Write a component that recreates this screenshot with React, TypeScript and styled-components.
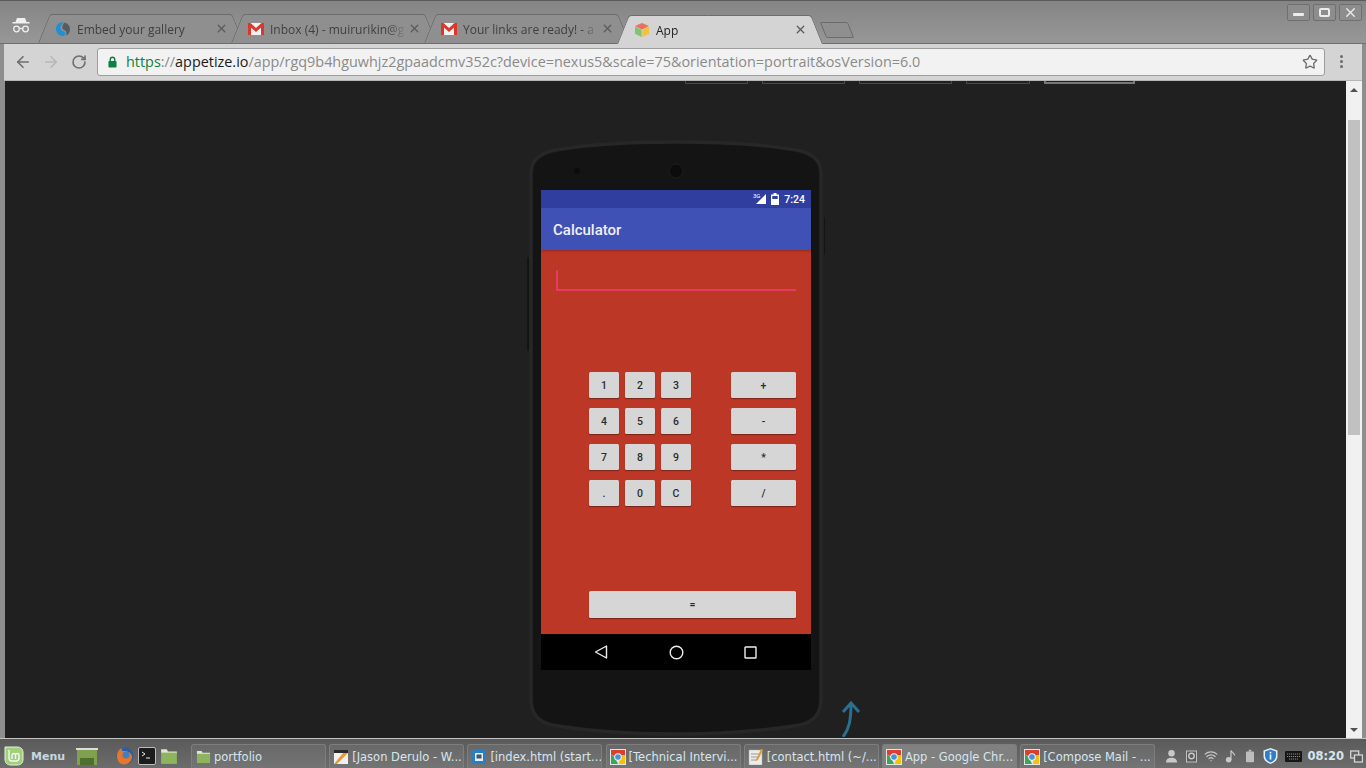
import React from 'react';

import { ArrowLeft, ArrowRight, RotateCw, Star, Wifi, X } from 'lucide-react';
import styled, { createGlobalStyle } from 'styled-components';

const GlobalStyle = createGlobalStyle`
  html, body {
    margin: 0;
    padding: 0;
    height: 100%;
    overflow: hidden;
    background: #5f5f5f;
  }
  * {
    box-sizing: border-box;
  }
`;

const GmailIcon = () => (
  <svg width="16" height="14" viewBox="0 0 16 14">
    <rect x="0" y="1" width="16" height="12" fill="#f2f2f2" />
    <path d="M0 1h2.500L8 6l5.500-5H16v12h-3V5.500L8 10 3 5.500V13H0z" fill="#d9392c" />
  </svg>
);

const SimplenoteIcon = () => (
  <svg width="16" height="16" viewBox="0 0 16 16">
    <path d="M9 1C4 1 1 4 1 8c0 4 3 7 7 7 2 0 3-2 2-3.500C9 10 6 10 5.500 7.500 5 5 7 2.500 9 1z" fill="#1f8fd6" />
    <path d="M9.500 1.500c3.500 1 5.500 3.500 5.500 6.500 0 3.500-2 6-4 6.500 1-2 .5-4-1-5-1.500-1-3-1.500-2.700-3.500.2-2 1.200-3 2.200-4.500z" fill="#555c62" />
  </svg>
);

const CubeIcon = () => (
  <svg width="16" height="16" viewBox="0 0 16 16">
    <path d="M8 1l7 3-7 3.400L1 4z" fill="#e8705f" />
    <path d="M1 4.500l6.600 3.300V15L1 11.800z" fill="#7cc576" />
    <path d="M15 4.500L8.400 7.800V15l6.600-3.200z" fill="#f3c13c" />
  </svg>
);

const IncognitoIcon = () => (
  <svg width="18" height="18" viewBox="0 0 18 18" fill="none">
    <path d="M5 2h8l1.500 4H3.500z" fill="#f0f0f0" />
    <rect x="0.500" y="6" width="17" height="1.500" fill="#f0f0f0" />
    <circle cx="4.500" cy="13" r="2.800" stroke="#f0f0f0" strokeWidth="1.300" />
    <circle cx="13.500" cy="13" r="2.800" stroke="#f0f0f0" strokeWidth="1.300" />
    <path d="M7.300 12.500h3.400" stroke="#f0f0f0" strokeWidth="1.300" />
  </svg>
);

const LockIcon = () => (
  <svg width="9" height="12" viewBox="0 0 10 13" fill="none">
    <path d="M2.500 6V3.700a2.500 2.500 0 015 0V6" stroke="#0b8043" strokeWidth="1.500" />
    <rect x="0.500" y="5.500" width="9" height="7" rx="0.800" fill="#0b8043" />
  </svg>
);

const ChromeIcon = () => (
  <svg width="16" height="16" viewBox="0 0 16 16">
    <rect width="16" height="16" fill="#e5e5e5" />
    <path d="M1 1h14v5.500H8a3 3 0 00-2.600 1.500L1 5z" fill="#d8402f" />
    <path d="M1 4.500L5.500 9.500 8 15H1z" fill="#3aa757" />
    <path d="M15 6H10l-1 9h6z" fill="#f4c20d" />
    <circle cx="8" cy="8" r="3.800" fill="#f0f0f0" />
    <circle cx="8" cy="8" r="2.800" fill="#4a8fe0" />
  </svg>
);

const FolderIcon = ({ size = 15 }: { size?: number }) => (
  <svg width={size} height={size} viewBox="0 0 16 16">
    <path d="M1 2h5l1 2h8v2H1z" fill="#dfe8d0" />
    <path d="M1 5h14v10H1z" fill="#8fb45f" />
  </svg>
);

const DesktopIcon = () => (
  <svg width="22" height="17" viewBox="0 0 22 17">
    <rect x="0" y="0" width="22" height="2" fill="#dcdcdc" />
    <rect x="1" y="2" width="20" height="15" fill="#7fa04f" />
    <rect x="4" y="10" width="14" height="7" fill="#4f6f30" />
  </svg>
);

const MintIcon = () => (
  <svg width="20" height="20" viewBox="0 0 20 20" fill="none">
    <path d="M1 1h12c4 0 6 2 6 6v6c0 4-2 6-6 6H7c-4 0-6-2-6-6z" fill="#9fd07a" stroke="#e8f3dd" strokeWidth="1" />
    <path d="M5 4v8c0 2 1 3 3 3h4c2 0 3-1 3-3V9c0-2-3-2-3.500 0v4M8 13V9c.5-2 3.500-2 3.500 0" stroke="#f5f5f5" strokeWidth="1.400" />
  </svg>
);

const FirefoxIcon = () => (
  <svg width="18" height="18" viewBox="0 0 18 18">
    <circle cx="9" cy="9" r="8.500" fill="#2a5fa8" />
    <path d="M1 9c0-4 2-7 5-8-1 2 0 3 2 3 4 0 7 2 8 5 .5 4-3 8.500-8 8.500S1 13 1 9z" fill="#e8752a" />
    <circle cx="10" cy="8" r="3.500" fill="#3f7fc4" />
  </svg>
);

const TerminalIcon = () => (
  <svg width="18" height="18" viewBox="0 0 18 18" fill="none">
    <rect x="0.500" y="0.500" width="17" height="17" rx="1.500" fill="#1c1c1c" stroke="#bcbcbc" />
    <path d="M4 5l3 2-3 2M8 11h4" stroke="#e8e8e8" />
  </svg>
);

const ClapperIcon = () => (
  <svg width="16" height="16" viewBox="0 0 16 16">
    <rect x="1" y="1" width="14" height="3" fill="#2a2a2a" />
    <rect x="1" y="4" width="14" height="11" fill="#f1f1f1" />
    <path d="M1 15l9-11h5L4 15z" fill="#e79a3a" />
  </svg>
);

const BracketsIcon = () => (
  <svg width="14" height="14" viewBox="0 0 14 14">
    <rect width="14" height="14" rx="2" fill="#2a7fc4" />
    <rect x="3" y="3" width="8" height="8" fill="#e8eef2" />
    <rect x="4.500" y="4.500" width="5" height="4" fill="#3d5a70" />
  </svg>
);

const NotesIcon = () => (
  <svg width="16" height="16" viewBox="0 0 16 16">
    <rect x="1" y="1" width="13" height="15" fill="#ececec" stroke="#aaa" strokeWidth="0.500" />
    <path d="M3 5h9M3 8h8M3 11h6" stroke="#9a9a9a" />
    <path d="M13 0l2 1-5 10-2 1 .3-2z" fill="#d9a13a" />
  </svg>
);

const PersonIcon = () => (
  <svg width="13" height="14" viewBox="0 0 14 14" fill="#c9c9c9">
    <circle cx="7" cy="4" r="3.500" />
    <path d="M1 14c0-3 2-5 6-5s6 2 6 5z" />
  </svg>
);

const UpdateIcon = () => (
  <svg width="11" height="13" viewBox="0 0 12 13" fill="none">
    <rect x="0.500" y="0.500" width="11" height="12" fill="#5c5c5c" stroke="#c9c9c9" />
    <circle cx="6" cy="6" r="3" stroke="#c9c9c9" strokeWidth="1.500" />
  </svg>
);

const NoteIcon = () => (
  <svg width="11" height="14" viewBox="0 0 12 14" fill="none">
    <circle cx="4" cy="11" r="3" fill="#c9c9c9" />
    <path d="M6.500 11V1c.5 2 4 2.500 4 5.500" stroke="#c9c9c9" strokeWidth="1.300" />
  </svg>
);

const BatteryIcon = () => (
  <svg width="8" height="14" viewBox="0 0 9 14">
    <rect x="3" y="0" width="3" height="2" fill="#bdbdbd" />
    <rect x="0" y="2" width="9" height="12" rx="1" fill="#bdbdbd" />
  </svg>
);

const ShieldIcon = () => (
  <svg width="15" height="16" viewBox="0 0 15 16">
    <path d="M7.500 0l7 2.500V8c0 4-3 6.500-7 8-4-1.500-7-4-7-8V2.500z" fill="#e8eef4" />
    <path d="M7.500 1.500l5.500 2V8c0 3-2.500 5.300-5.500 6.500C4.500 13.300 2 11 2 8V3.500z" fill="#2f7fc8" />
    <rect x="6.700" y="6.500" width="1.600" height="5" fill="#fff" />
    <rect x="6.700" y="3.800" width="1.600" height="1.700" fill="#fff" />
  </svg>
);

const KeyboardIcon = () => (
  <svg width="17" height="11" viewBox="0 0 17 11" fill="none">
    <rect width="17" height="11" rx="1" fill="#161616" />
    <path d="M2 3h13M2 5.500h13M4 8h9" stroke="#8a8a8a" strokeDasharray="1.200 .8" />
  </svg>
);

const WindowsIcon = () => (
  <svg width="13" height="13" viewBox="0 0 13 13" fill="none" stroke="#d5d5d5" strokeWidth="1.300">
    <rect x="0.700" y="1" width="8" height="7" />
    <rect x="4.500" y="5" width="8" height="7" fill="#5c5c5c" />
  </svg>
);

const tabs = [
  { title: 'Embed your gallery', icon: <SimplenoteIcon /> },
  { title: 'Inbox (4) - muirurikin@g', icon: <GmailIcon /> },
  { title: 'Your links are ready! - a', icon: <GmailIcon /> },
  { title: 'App', icon: <CubeIcon />, active: true },
];

const windows = [
  { title: 'portfolio', icon: <FolderIcon /> },
  { title: '[Jason Derulo - W...', icon: <ClapperIcon /> },
  { title: '[index.html (start...', icon: <BracketsIcon /> },
  { title: '[Technical Intervi...', icon: <ChromeIcon /> },
  { title: '[contact.html (~/...', icon: <NotesIcon /> },
  { title: 'App - Google Chr...', icon: <ChromeIcon />, active: true },
  { title: '[Compose Mail - ...', icon: <ChromeIcon /> },
];

const siteLinks = [
  { width: 63 },
  { width: 83 },
  { width: 93 },
  { width: 64 },
  { width: 91, bright: true },
];

const trayItems = [
  { width: 21, icon: <PersonIcon /> },
  { width: 19, icon: <UpdateIcon /> },
  { width: 20, icon: <Wifi size={14} color="#c9c9c9" strokeWidth={2.2} /> },
  { width: 19, icon: <NoteIcon /> },
  { width: 20, icon: <BatteryIcon /> },
  { width: 21, icon: <ShieldIcon /> },
  { width: 24, icon: <KeyboardIcon /> },
];

const digits = ['1', '2', '3', '4', '5', '6', '7', '8', '9', '.', '0', 'C'];
const operators = ['+', '-', '*', '/'];

export default function App() {
  return (
    <>
      <GlobalStyle />
      <Desktop>
        <BrowserWindow>
          <TabStrip>
            <IncognitoBox>
              <IncognitoIcon />
            </IncognitoBox>
            {tabs.map((tab) => (
              <Tab key={tab.title} $active={tab.active}>
                <TabIcon>{tab.icon}</TabIcon>
                <TabTitle $active={tab.active}>{tab.title}</TabTitle>
                <TabClose>
                  <X size={13} strokeWidth={2.4} />
                </TabClose>
              </Tab>
            ))}
            <NewTab />
            <WindowControls>
              <WindowButton>
                <MinimizeGlyph />
              </WindowButton>
              <WindowButton>
                <MaximizeGlyph />
              </WindowButton>
              <WindowButton>
                <X size={15} strokeWidth={2.2} color="#ececec" />
              </WindowButton>
            </WindowControls>
          </TabStrip>

          <Toolbar>
            <NavButton>
              <ArrowLeft size={18} strokeWidth={2.2} color="#6e6e6e" />
            </NavButton>
            <NavButton>
              <ArrowRight size={18} strokeWidth={2.2} color="#b6b6b6" />
            </NavButton>
            <NavButton>
              <RotateCw size={16} strokeWidth={2.4} color="#6e6e6e" />
            </NavButton>
            <Omnibox>
              <LockIcon />
              <Url>
                <UrlScheme>https</UrlScheme>
                <UrlRest>://</UrlRest>
                <UrlHost>appetize.io</UrlHost>
                <UrlRest>
                  /app/rgq9b4hguwhjz2gpaadcmv352c?device=nexus5&amp;scale=75&amp;orientation=portrait&amp;osVersion=6.0
                </UrlRest>
              </Url>
              <StarBox>
                <Star size={16} strokeWidth={2} color="#6e6e6e" />
              </StarBox>
            </Omnibox>
            <MenuDots>
              <i />
              <i />
              <i />
            </MenuDots>
          </Toolbar>

          <Viewport>
            <Page>
              <SiteNav>
                {siteLinks.map((link, i) => (
                  <SiteLink key={i} $width={link.width} $bright={link.bright} />
                ))}
              </SiteNav>

              <Phone>
                <PhoneBody viewBox="0 0 298 598" width="298" height="598">
                  <path
                    d="M4 35C4 22 11 16 24 12 60 5 110 3 149 3s89 2 125 9c13 4 20 10 20 23v525c0 15-7 23-21 26-42 7-82 9-124 9s-82-2-124-9C11 583 4 575 4 560z"
                    fill="#141414"
                    stroke="#272727"
                    strokeWidth="3.500"
                  />
                  <circle cx="50" cy="32" r="3" fill="#0c0c0c" />
                  <circle cx="149" cy="32" r="7" fill="#0c0c0c" stroke="#1f1f1f" />
                  <path d="M298 78v38" stroke="#141414" strokeWidth="2" />
                  <path d="M1 118v94" stroke="#141414" strokeWidth="2" />
                </PhoneBody>
                <Screen>
                  <StatusBar>
                    <svg width="14" height="12" viewBox="0 0 14 12">
                      <path d="M13 1v10H3z" fill="#fff" />
                      <text x="0" y="5" fontSize="6" fontFamily="Roboto, sans-serif" fill="#fff">
                        3G
                      </text>
                    </svg>
                    <svg width="8" height="12" viewBox="0 0 8 12">
                      <rect x="2.500" y="0" width="3" height="2" fill="#fff" />
                      <rect x="0" y="1.500" width="8" height="10.500" fill="#fff" />
                      <rect x="1.300" y="3" width="5.400" height="3" fill="#303f9f" />
                    </svg>
                    <StatusTime>7:24</StatusTime>
                  </StatusBar>
                  <AppBar>Calculator</AppBar>
                  <CalcBody>
                    <InputField />
                    <Keypad>
                      <DigitGrid>
                        {digits.map((d) => (
                          <KeyButton key={d}>{d}</KeyButton>
                        ))}
                      </DigitGrid>
                      <OperatorGrid>
                        {operators.map((o) => (
                          <KeyButton key={o}>{o}</KeyButton>
                        ))}
                      </OperatorGrid>
                    </Keypad>
                    <EqualsButton>=</EqualsButton>
                  </CalcBody>
                  <NavBar>
                    <svg width="14" height="14" viewBox="0 0 14 14" fill="none" stroke="#eee" strokeWidth="1.400">
                      <path d="M12.500 1v12L1.500 7z" strokeLinejoin="round" />
                    </svg>
                    <svg width="15" height="15" viewBox="0 0 15 15" fill="none" stroke="#eee" strokeWidth="1.400">
                      <circle cx="7.500" cy="7.500" r="6.300" />
                    </svg>
                    <svg width="13" height="13" viewBox="0 0 13 13" fill="none" stroke="#eee" strokeWidth="1.400">
                      <rect x="1" y="1" width="11" height="11" rx="0.500" />
                    </svg>
                  </NavBar>
                </Screen>
              </Phone>

              <HintArrow viewBox="0 0 22 36" width="22" height="36" fill="none">
                <path d="M3 36C9 28 11 20 11 2M3 11l8-9 8 9" stroke="#2a6f8f" strokeWidth="3" />
              </HintArrow>
            </Page>

            <Scrollbar>
              <ScrollArrow $up />
              <ScrollTrack>
                <ScrollThumb />
              </ScrollTrack>
              <ScrollArrow />
            </Scrollbar>
          </Viewport>
        </BrowserWindow>

        <Taskbar>
          <MenuButton>
            <MintIcon />
            <MenuLabel>Menu</MenuLabel>
          </MenuButton>
          <LaunchGroup $gap={0}>
            <DesktopIcon />
          </LaunchGroup>
          <LaunchGroup $gap={4}>
            <FirefoxIcon />
            <TerminalIcon />
            <FolderIcon size={18} />
          </LaunchGroup>
          <WindowList>
            {windows.map((win) => (
              <WindowItem key={win.title} $active={win.active}>
                <WindowIcon>{win.icon}</WindowIcon>
                <span>{win.title}</span>
              </WindowItem>
            ))}
          </WindowList>
          <Tray>
            {trayItems.map((item, i) => (
              <TraySlot key={i} $width={item.width}>
                {item.icon}
              </TraySlot>
            ))}
            <Clock>08:20</Clock>
            <WindowsIcon />
          </Tray>
        </Taskbar>
      </Desktop>
    </>
  );
}

const Desktop = styled.div`
  width: 1366px;
  height: 768px;
  display: flex;
  flex-direction: column;
  overflow: hidden;
  font-family: 'DejaVu Sans', sans-serif;
`;

const BrowserWindow = styled.div`
  height: 738px;
  display: flex;
  flex-direction: column;
  background: #8e8e8e;
  border-top: 1px solid #5a5a5a;
`;

const TabStrip = styled.div`
  height: 43px;
  flex: none;
  display: flex;
  align-items: flex-end;
  background: linear-gradient(#858585, #979797);
  border-bottom: 1px solid #6e6e6e;
  padding-right: 4px;
`;

const IncognitoBox = styled.div`
  width: 38px;
  height: 38px;
  flex: none;
  padding: 2px 0 0 12px;
  display: flex;
  align-items: center;
`;

const Tab = styled.div<{ $active?: boolean }>`
  position: relative;
  z-index: ${(p) => (p.$active ? 2 : 1)};
  isolation: isolate;
  width: 205px;
  height: 29px;
  flex: none;
  margin-right: -12px;
  margin-bottom: ${(p) => (p.$active ? '-1px' : '0')};
  padding: 0 15px 0 17px;
  display: flex;
  align-items: center;
  font-family: 'Open Sans', sans-serif;
  font-size: 12px;

  &::before,
  &::after {
    content: '';
    position: absolute;
    z-index: -1;
    top: 0;
    bottom: 0;
    width: 50%;
    background: ${(p) => (p.$active ? '#d4d4d4' : '#8f8f8f')};
    border-top: 1px solid #6b6b6b;
    transform-origin: bottom;
  }
  &::before {
    left: 0;
    border-left: 1px solid #6b6b6b;
    border-top-left-radius: 3px;
    transform: skewX(-22deg);
  }
  &::after {
    right: 0;
    border-right: 1px solid #6b6b6b;
    border-top-right-radius: 3px;
    transform: skewX(22deg);
  }
`;

const TabIcon = styled.span`
  width: 16px;
  height: 16px;
  flex: none;
  display: flex;
  align-items: center;
  justify-content: center;
`;

const TabTitle = styled.span<{ $active?: boolean }>`
  flex: 1;
  min-width: 0;
  margin: 1px 0 0 6px;
  white-space: nowrap;
  color: ${(p) => (p.$active ? '#222' : '#3f3f3f')};
  mask-image: linear-gradient(to right, #000 88%, rgba(0, 0, 0, 0.15));
`;

const TabClose = styled.span`
  width: 13px;
  height: 13px;
  flex: none;
  margin-left: 4px;
  color: #5a5a5a;
  display: flex;
`;

const NewTab = styled.div`
  width: 28px;
  height: 16px;
  flex: none;
  margin: 0 0 5px 13px;
  background: #8f8f8f;
  border: 1px solid #6b6b6b;
  border-radius: 2px;
  transform: skewX(22deg);
`;

const WindowControls = styled.div`
  margin-left: auto;
  align-self: flex-start;
  margin-top: 3px;
  display: flex;
  gap: 3px;
`;

const WindowButton = styled.div`
  width: 23px;
  height: 17px;
  display: flex;
  align-items: center;
  justify-content: center;
  background: #8d8d8d;
  border: 1px solid #6f6f6f;
  border-radius: 2px;
`;

const MinimizeGlyph = styled.i`
  width: 11px;
  height: 3px;
  margin-top: 3px;
  background: #ececec;
  border-radius: 1px;
`;

const MaximizeGlyph = styled.i`
  width: 11px;
  height: 9px;
  border: 2px solid #ececec;
  border-radius: 2px;
`;

const Toolbar = styled.div`
  height: 37px;
  flex: none;
  margin: 0 4px;
  padding: 4px 0 5px 5px;
  display: flex;
  align-items: center;
  background: #d4d4d4;
  border-bottom: 1px solid #b5b5b5;
`;

const NavButton = styled.div`
  width: 28px;
  height: 28px;
  flex: none;
  display: flex;
  align-items: center;
  justify-content: center;
`;

const Omnibox = styled.div`
  flex: none;
  width: 1228px;
  height: 28px;
  margin-left: 4px;
  padding: 0 6px 0 10px;
  display: flex;
  align-items: center;
  background: #f2f2f2;
  border: 1px solid #9d9d9d;
  border-radius: 3px;
`;

const Url = styled.div`
  flex: 1;
  margin-left: 9px;
  white-space: nowrap;
  font-family: 'Open Sans', sans-serif;
  font-size: 14.4px;
`;

const UrlScheme = styled.span`
  color: #0b8043;
`;

const UrlHost = styled.span`
  color: #1a1a1a;
`;

const UrlRest = styled.span`
  color: #8a8a8a;
`;

const StarBox = styled.div`
  display: flex;
`;

const MenuDots = styled.div`
  width: 33px;
  display: flex;
  flex-direction: column;
  align-items: center;
  gap: 2px;

  i {
    width: 3px;
    height: 3px;
    background: #6a6a6a;
    border-radius: 50%;
  }
`;

const Viewport = styled.div`
  flex: 1;
  min-height: 0;
  margin: 0 4px 0 5px;
  display: flex;
`;

const Page = styled.div`
  position: relative;
  flex: 1;
  min-width: 0;
  overflow: hidden;
  background: #202020;
`;

const SiteNav = styled.div`
  height: 3px;
  padding-left: 680px;
  display: flex;
  align-items: flex-end;
  gap: 14px;
`;

const SiteLink = styled.div<{ $width: number; $bright?: boolean }>`
  width: ${(p) => p.$width}px;
  height: 12px;
  flex: none;
  border: 1px solid ${(p) => (p.$bright ? '#777' : '#4a4a4a')};
  border-width: ${(p) => (p.$bright ? '2px' : '1px')};
`;

const Phone = styled.div`
  position: relative;
  width: 298px;
  height: 598px;
  margin: 55px 0 0 522px;
  padding: 51px 14px 0;
`;

const PhoneBody = styled.svg`
  position: absolute;
  top: 0;
  left: 0;
`;

const Screen = styled.div`
  position: relative;
  width: 270px;
  height: 480px;
  display: flex;
  flex-direction: column;
  font-family: Roboto, sans-serif;
`;

const StatusBar = styled.div`
  height: 18px;
  flex: none;
  padding: 0 6px 0 0;
  display: flex;
  align-items: center;
  justify-content: flex-end;
  gap: 4px;
  background: #303f9f;
  color: #fff;
`;

const StatusTime = styled.span`
  margin-left: 1px;
  font-size: 10.5px;
  font-weight: 500;
`;

const AppBar = styled.div`
  height: 42px;
  flex: none;
  padding: 1px 0 0 12px;
  display: flex;
  align-items: center;
  background: #3f51b5;
  color: #f0f0f6;
  font-size: 15px;
  font-weight: 500;
  box-shadow: 0 1px 2px rgba(0, 0, 0, 0.25);
  z-index: 1;
`;

const CalcBody = styled.div`
  flex: 1;
  padding: 20px 15px 0;
  display: flex;
  flex-direction: column;
  background: #bc3726;
`;

const InputField = styled.div`
  position: relative;
  height: 21px;
  flex: none;
  border-bottom: 2px solid #e8395f;

  &::before {
    content: '';
    position: absolute;
    left: 0;
    top: 0;
    width: 2px;
    height: 19px;
    background: #e8395f;
  }
`;

const Keypad = styled.div`
  margin: 81px 0 0 33px;
  display: flex;
  gap: 40px;
`;

const DigitGrid = styled.div`
  display: grid;
  grid-template-columns: repeat(3, 30px);
  grid-auto-rows: 26px;
  gap: 10px 6px;
`;

const OperatorGrid = styled.div`
  display: grid;
  grid-template-columns: 65px;
  grid-auto-rows: 26px;
  row-gap: 10px;
`;

const KeyButton = styled.div`
  display: flex;
  align-items: center;
  justify-content: center;
  background: #d6d6d6;
  border-radius: 1.5px;
  box-shadow: 0 1px 1px rgba(0, 0, 0, 0.35);
  color: #2c2c2c;
  font-size: 10.5px;
  font-weight: 500;
`;

const EqualsButton = styled(KeyButton)`
  height: 27px;
  flex: none;
  margin: 85px 0 0 33px;
`;

const NavBar = styled.div`
  height: 36px;
  flex: none;
  padding: 0 54px 0 53px;
  display: flex;
  align-items: center;
  justify-content: space-between;
  background: #000;
`;

const HintArrow = styled.svg`
  position: absolute;
  left: 835px;
  top: 620px;
`;

const Scrollbar = styled.div`
  width: 16px;
  flex: none;
  display: flex;
  flex-direction: column;
  background: #f1f1f1;
`;

const ScrollArrow = styled.div<{ $up?: boolean }>`
  height: 17px;
  flex: none;
  display: flex;
  align-items: center;
  justify-content: center;

  &::before {
    content: '';
    border-left: 4px solid transparent;
    border-right: 4px solid transparent;
    ${(p) => (p.$up ? 'border-bottom: 4px solid #505050;' : 'border-top: 4px solid #505050;')}
  }
`;

const ScrollTrack = styled.div`
  flex: 1;
  padding: 22px 2px 0;
`;

const ScrollThumb = styled.div`
  height: 315px;
  background: #c1c1c1;
`;

const Taskbar = styled.div`
  height: 30px;
  flex: none;
  display: flex;
  align-items: center;
  padding: 5px 0 0 4px;
  background: linear-gradient(#5a5a5a, #6c6c6c);
  border-top: 1px solid #c4c4c4;
`;

const MenuButton = styled.div`
  width: 70px;
  flex: none;
  display: flex;
  align-items: center;
  gap: 7px;
`;

const MenuLabel = styled.span`
  color: #c6d8e0;
  font-size: 11px;
  font-weight: 700;
`;

const LaunchGroup = styled.div<{ $gap: number }>`
  flex: none;
  margin-left: ${(p) => (p.$gap ? 18 : 2)}px;
  display: flex;
  align-items: center;
  gap: ${(p) => p.$gap}px;
`;

const WindowList = styled.div`
  flex: none;
  margin-left: 13px;
  display: flex;
  gap: 3.2px;
`;

const WindowItem = styled.div<{ $active?: boolean }>`
  width: 135px;
  height: 24px;
  padding-left: 3px;
  display: flex;
  align-items: center;
  gap: 3px;
  overflow: hidden;
  background: ${(p) => (p.$active ? '#808080' : 'linear-gradient(#686868, #747474)')};
  border: 1px solid #7e7e7e;
  border-bottom: 0;
  border-radius: 3px 3px 0 0;
  color: #d6e6ee;
  font-size: 11.5px;
  white-space: nowrap;
`;

const WindowIcon = styled.span`
  width: 16px;
  height: 16px;
  flex: none;
  display: flex;
  align-items: center;
  justify-content: center;
`;

const Tray = styled.div`
  margin-left: auto;
  flex: none;
  padding-right: 3px;
  display: flex;
  align-items: center;
`;

const TraySlot = styled.div<{ $width: number }>`
  width: ${(p) => p.$width}px;
  flex: none;
  display: flex;
  align-items: center;
  justify-content: center;
`;

const Clock = styled.span`
  margin: 0 6px 0 2px;
  color: #d6e6ee;
  font-size: 11.5px;
  font-weight: 700;
`;
